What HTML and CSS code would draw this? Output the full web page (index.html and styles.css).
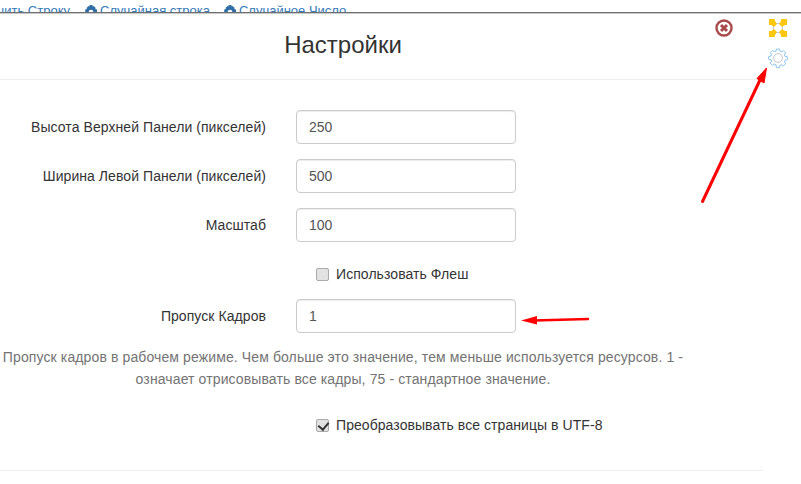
FILE: index.html
```html
<!DOCTYPE html>
<html lang="en">

<head>
    <meta charset="UTF-8">
    <title>Настройки</title>
    <link rel="stylesheet" href="styles.css">
</head>

<body>
    <div class="top-links">
        <a class="first-link">Уменьшить Строку</a>
        <a><svg class="cog" viewBox="0 0 12 12"><path d="M4.600 0h2.800l.3 1.600 1-.5 2 2-.5 1 1.800.3v2.800H8.400a2.400 2.400 0 1 0-4.800 0H.2V4.400L2 4.100l-.5-1 2-2 1 .5z"/></svg>Случайная строка</a>
        <a><svg class="cog" viewBox="0 0 12 12"><path d="M4.600 0h2.800l.3 1.600 1-.5 2 2-.5 1 1.800.3v2.800H8.400a2.400 2.400 0 1 0-4.800 0H.2V4.400L2 4.100l-.5-1 2-2 1 .5z"/></svg>Случайное Число</a>
    </div>

    <div class="modal">
        <div class="modal-header">
            <h1>Настройки</h1>
        </div>
        <div class="modal-body">
            <div class="form-row">
                <label>Высота Верхней Панели (пикселей)</label>
                <input type="text" value="250">
            </div>
            <div class="form-row">
                <label>Ширина Левой Панели (пикселей)</label>
                <input type="text" value="500">
            </div>
            <div class="form-row">
                <label>Масштаб</label>
                <input type="text" value="100">
            </div>
            <div class="check-row flash-row">
                <input type="checkbox" id="flash">
                <label for="flash">Использовать Флеш</label>
            </div>
            <div class="form-row skip-row">
                <label>Пропуск Кадров</label>
                <input type="text" value="1">
            </div>
            <p class="help">Пропуск кадров в рабочем режиме. Чем больше это значение, тем меньше используется ресурсов. 1 - означает отрисовывать все кадры, 75 - стандартное значение.</p>
            <div class="check-row">
                <input type="checkbox" id="utf" checked>
                <label for="utf">Преобразовывать все страницы в UTF-8</label>
            </div>
        </div>
    </div>

    <!-- close button -->
    <svg class="close-icon" viewBox="0 0 18 18">
        <circle cx="9" cy="9" r="7.500" fill="none" stroke="#a94a4a" stroke-width="2.400"/>
        <path d="M6 6l6 6M12 6l-6 6" stroke="#a94a4a" stroke-width="3"/>
    </svg>

    <!-- fullscreen -->
    <svg class="full-icon" viewBox="0 0 18 18">
        <rect x="4.500" y="4.500" width="9" height="9" fill="#fff" stroke="#b9c9dc"/>
        <path d="M0 0h6v2l2 3-3 3-3-2H0zM18 0v6h-2l-3 2-3-3 2-3V0zM0 18v-6h2l3-2 3 3-2 3v2zM18 18h-6v-2l-2-3 3-3 3 2h2z" fill="#fcc80f"/>
    </svg>

    <!-- settings -->
    <svg class="gear-icon" viewBox="0 0 20 20" fill="none">
        <circle cx="10" cy="10" r="4.400" stroke="#c3c8ce" stroke-width="1"/>
        <path d="M8.400 1h3.200l.4 2.300 1.500.6 1.900-1.300 2.300 2.300-1.300 1.900.6 1.500 2.300.4v3.200l-2.300.4-.6 1.500 1.300 1.900-2.300 2.300-1.900-1.300-1.500.6-.4 2.300H8.400L8 16.700l-1.500-.6-1.900 1.300-2.300-2.300 1.300-1.900-.6-1.500-2.300-.4V8.400l2.300-.4.6-1.500-1.300-1.900 2.300-2.300 1.900 1.300L8 3.300z" stroke="#8cc4ee" stroke-width="1"/>
    </svg>

    <!-- red arrows drawn on top of the shot -->
    <svg class="marks" viewBox="0 0 801 484" fill="none">
        <path d="M702.500 201.500L760 80" stroke="#f00" stroke-width="3" stroke-linecap="round"/>
        <path d="M766.500 68L757 78.500 764 83z" fill="#f00" stroke="#f00"/>
        <path d="M534 320.500L588 319" stroke="#f00" stroke-width="2.500" stroke-linecap="round"/>
        <path d="M521 320.500L537 316 537 324.500z" fill="#f00"/>
    </svg>
</body>
</html>
```
FILE: styles.css
```css
* {
    margin: 0;
    padding: 0;
    box-sizing: border-box;
}

body {
    font-family: "Liberation Sans", Arial, sans-serif;
    font-size: 14px;
    line-height: 20px;
    letter-spacing: 0.065px;
    color: #333;
    background-color: #fff;
    height: 484px;
    overflow: hidden;
    position: relative;
}

.top-links {
    display: flex;
    height: 13px;
    padding-top: 1px;
    overflow: hidden;
    border-bottom: 1px solid #707070;
    box-shadow: 0 1px 0 #c8c8c8;
    color: #337ab7;
    font-size: 13px;
    letter-spacing: 0;
    white-space: nowrap;
}

.top-links a {
    display: flex;
    align-items: flex-start;
    margin-right: 14px;
}

.top-links .first-link {
    width: 70px;
    justify-content: flex-end;
    margin-right: 15px;
}

.cog {
    width: 12px;
    height: 12px;
    margin: 4px 3px 0 0;
    fill: #2f6ea5;
}

.modal {
    width: 763px;
}

.modal-header {
    height: 67px;
    border-bottom: 1px solid #eee;
    padding: 0 77px 2px 0;
    display: flex;
    align-items: center;
    justify-content: center;
}

h1 {
    font-size: 24px;
    font-weight: 400;
    line-height: 26px;
    letter-spacing: 0;
}

.modal-body {
    padding: 30px 77px 0 0;
    height: 391px;
    border-bottom: 1px solid #eee;
}

.form-row {
    display: flex;
    align-items: center;
    margin-bottom: 15px;
}

.form-row label {
    width: 266px;
    text-align: right;
}

.form-row input {
    width: 220px;
    height: 34px;
    margin-left: 30px;
    padding: 6px 12px;
    border: 1px solid #ccc;
    border-radius: 4px;
    font: inherit;
    color: #555;
    box-shadow: inset 0 1px 1px rgba(0, 0, 0, 0.075);
}

.check-row {
    display: flex;
    align-items: center;
    height: 34px;
    padding-left: 316px;
}

.check-row input {
    appearance: none;
    position: relative;
    width: 13px;
    height: 13px;
    margin-right: 7px;
    border: 1px solid #a9a9a9;
    border-radius: 2px;
    background-color: #e2e2e2;
}

.check-row input:checked::after {
    content: "";
    position: absolute;
    left: 3px;
    top: 0;
    width: 5px;
    height: 8px;
    border-right: 2px solid #333;
    border-bottom: 2px solid #333;
    transform: rotate(40deg);
}

.flash-row {
    margin-bottom: 8px;
}

.skip-row {
    margin-bottom: 13px;
}

.help {
    color: #737373;
    line-height: 22px;
    letter-spacing: 0.115px;
    text-align: center;
    margin-bottom: 18px;
}

.close-icon {
    position: absolute;
    left: 715px;
    top: 19px;
    width: 18px;
    height: 18px;
}

.full-icon {
    position: absolute;
    left: 769px;
    top: 19px;
    width: 18px;
    height: 18px;
}

.gear-icon {
    position: absolute;
    left: 768px;
    top: 48px;
    width: 20px;
    height: 20px;
}

.marks {
    position: absolute;
    left: 0;
    top: 0;
    width: 801px;
    height: 484px;
    pointer-events: none;
}
```
